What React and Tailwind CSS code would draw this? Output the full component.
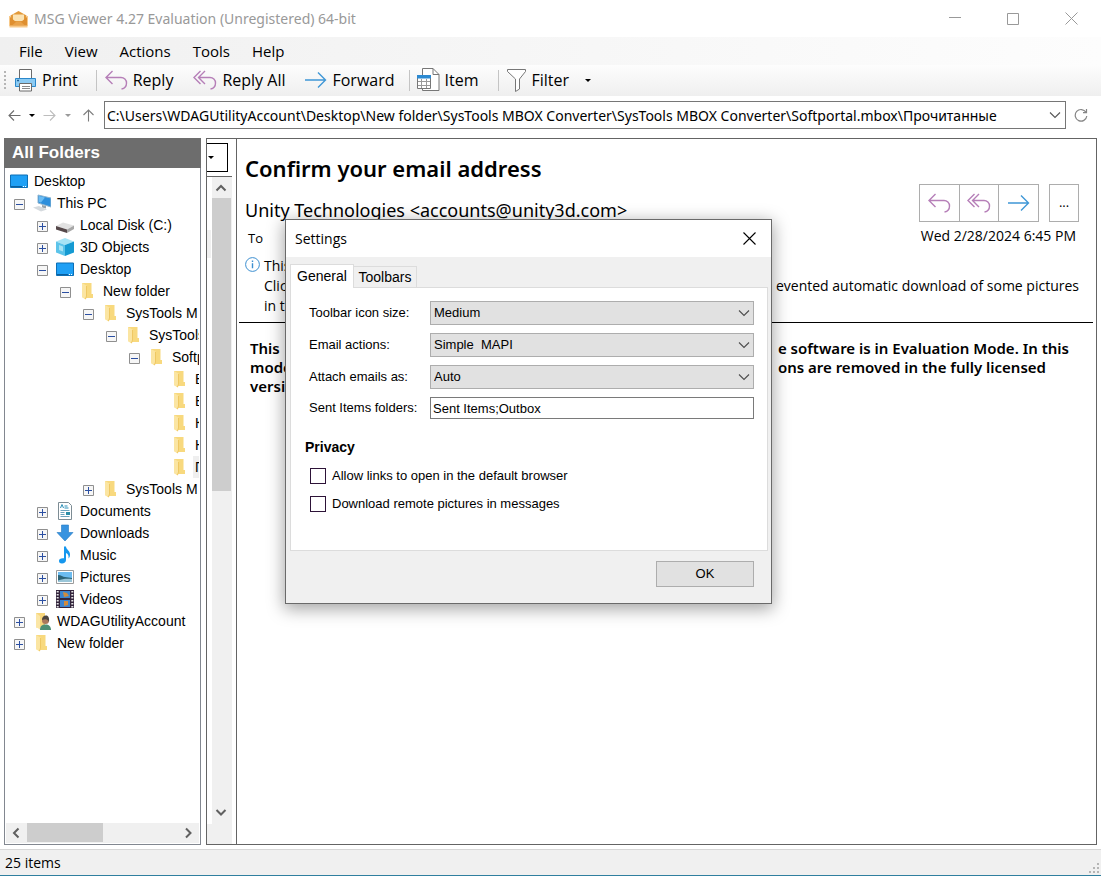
import React from "react";

const ui = "font-['Open_Sans','Noto_Sans',sans-serif]";

function AppIcon() {
  return (
    <svg width="19" height="18" viewBox="0 0 19 18" className="shrink-0" aria-hidden="true">
      <path d="M1.500 5.500 9.500 1l8 4.500V16h-16Z" fill="#e39a3a" />
      <path d="M4 4.500h11V11H4Z" fill="#fbe3b4" />
      <path d="M1 7l5.500 4.500h6L18 7v10H1Z" fill="#df8f30" />
      <path d="M3.500 15 7.500 11.500h4l4 3.500Z" fill="#e9a24a" />
      <path d="M.5 15.500h18v2H.5Z" fill="#f7c98a" />
      <path d="M.5 6v10M18.500 6v10" stroke="#f7c98a" />
    </svg>
  );
}

function PrintIcon() {
  return (
    <svg width="23" height="23" viewBox="0 0 23 23" className="shrink-0" aria-hidden="true">
      <path d="M5.500 9.500v-9h12v9" fill="#fff" stroke="#6b6b6b" />
      <path d="M1.500 9.500h20v8h-20Z" fill="#8ccbf3" stroke="#2b88cb" />
      <path d="M3 11.500h2" stroke="#1b5f96" strokeWidth="1.500" />
      <path d="M5.500 14.500h12v7.500h-12Z" fill="#fff" stroke="#6b6b6b" />
      <path d="M8 17.500h8M8 19.500h8" stroke="#8a8a8a" />
    </svg>
  );
}

function ReplyIcon() {
  return (
    <svg width="23" height="22" viewBox="0 0 23 22" fill="none" stroke="#b67fb8" strokeWidth="1.400" className="shrink-0" aria-hidden="true">
      <path d="M7.500 2 1 8.500 7.500 15M1 8.500h15a5.500 5.500 0 0 1 5.500 5.500c0 3-2 5.500-5 6" />
    </svg>
  );
}

function ReplyAllIcon() {
  return (
    <svg width="24" height="22" viewBox="0 0 24 22" fill="none" stroke="#b67fb8" strokeWidth="1.400" className="shrink-0" aria-hidden="true">
      <path d="M7.500 2 1 8.500 7.500 15M12 2 5.500 8.500 12 15M5.500 8.500H17a5.500 5.500 0 0 1 5.500 5.500c0 3-2 5.500-5 6" />
    </svg>
  );
}

function ForwardIcon() {
  return (
    <svg width="22" height="20" viewBox="0 0 22 20" fill="none" stroke="#3f97d6" strokeWidth="1.400" className="shrink-0" aria-hidden="true">
      <path d="M0 10h20.500M13 2.500l7.500 7.500-7.500 7.500" />
    </svg>
  );
}

function ItemIcon() {
  return (
    <svg width="24" height="24" viewBox="0 0 24 24" className="shrink-0" aria-hidden="true">
      <path d="M6.500.5h10.500l6 6v16h-16.500Z" fill="#fff" stroke="#777" />
      <path d="M17 .5v6h6" fill="none" stroke="#777" />
      <path d="M1.500 8.500h13v12h-13Z" fill="#fff" stroke="#777" />
      <path d="M1 7h14v3.500H1Z" fill="#2c8ad2" />
      <path d="M5.500 11v9M10.500 11v9M2 13.500h12M2 17.500h12" stroke="#9a9a9a" />
    </svg>
  );
}

function FilterIcon() {
  return (
    <svg width="20" height="23" viewBox="0 0 20 23" fill="#fff" stroke="#777" className="shrink-0" aria-hidden="true">
      <path d="M.5.5h18v2L12.500 10v10l-4 2.500V10L.5 2.500Z" />
    </svg>
  );
}

function Caret({ color = "#000" }) {
  return (
    <svg width="6" height="3" viewBox="0 0 6 3" className="shrink-0" aria-hidden="true">
      <path d="M0 0h6L3 3Z" fill={color} />
    </svg>
  );
}

function Chevron({ d, w = 12, h = 12, color = "#606060", stroke = 2 }) {
  return (
    <svg width={w} height={h} viewBox="0 0 12 12" fill="none" stroke={color} strokeWidth={stroke} aria-hidden="true">
      <path d={d} />
    </svg>
  );
}

const DOWN = "M1.500 4 6 8.500 10.500 4";
const UP = "M1.500 8.500 6 4l4.500 4.500";
const LEFT = "M8.500 1.500 4 6l4.500 4.500";
const RIGHT = "M4 1.500 8.500 6 4 10.500";

function NavArrow({ d, color }) {
  return (
    <svg width="13" height="13" viewBox="0 0 13 13" fill="none" stroke={color} strokeWidth="1.100" aria-hidden="true">
      <path d={d} />
    </svg>
  );
}

function TreeIcon({ kind }) {
  const shapes = {
    desktop: (
      <>
        <path d="M.5 3h17v12.500H.5Z" fill="#1fa0f5" stroke="#0d6fb5" />
        <path d="M1 14h11v1H1Z" fill="#0b5f9e" />
        <path d="M13 14.500h4" stroke="#fff" strokeDasharray="1 1" />
      </>
    ),
    pc: (
      <>
        <path d="M5 1l13 3v9L5 9Z" fill="#2d8fdc" stroke="#8eb4cf" />
        <path d="M6 2l6 1.500L8 8.500 6 8Z" fill="#6bbcf3" />
        <path d="M9 11l4 1v2.500l-4-1Z" fill="#9aa4ab" />
        <path d="M0 13.500l6-1.500 8 3.500-6 2Z" fill="#d5dade" />
      </>
    ),
    disk: (
      <>
        <path d="M0 10l7-3.500L18 9.500l-7 4Z" fill="#e2e2e2" />
        <path d="M0 10l11 3.500V17L0 13.500Z" fill="#55484a" />
        <path d="M11 13.500l7-4V13l-7 4Z" fill="#a7a7a7" />
      </>
    ),
    cube: (
      <>
        <path d="M0 3.500 9 0l9 3.500L9 7Z" fill="#a6e3f5" />
        <path d="M0 3.500 9 7v11l-9-3.500Z" fill="#5cc4ea" />
        <path d="M18 3.500 9 7v11l9-3.500Z" fill="#149ad2" />
        <path d="M3 7l4 1.500v5L3 12Z" fill="#a6e3f5" />
      </>
    ),
    folder: (
      <>
        <path d="M3 1h9.500v11H14v4H7v1.500L3 15Z" fill="#f8d97e" />
        <path d="M3 1l4.500 2.500V14L6.500 17.500 3 15Z" fill="#fbe5a2" />
        <path d="M7.500 4v10l-1 3" stroke="#efc863" />
      </>
    ),
    doc: (
      <>
        <path d="M2.500.5h10l3 3v14h-13Z" fill="#fff" stroke="#7d8c94" />
        <path d="M4.500 6 6 2.500 7.500 6M8.500 4h3M8.500 6h4M10 10.500h3.500" stroke="#2a8fb8" fill="none" />
        <path d="M4.500 8.500h9M4.500 10.500h4M4.500 12.500h4M4.500 14.500h9" stroke="#6aa3bd" />
        <path d="M10 10h4v3h-4Z" fill="#2c8ea8" />
      </>
    ),
    down: <path d="M5.500 1h7v7.500H17L9 17 1 8.500h4.500Z" fill="#3793e0" stroke="#2178c2" strokeWidth=".6" />,
    music: (
      <path d="M8 .5h2c0 3 4 4 4 8 0 2-.6 3-1.500 4 .5-3-.5-4.500-2.500-5.500V14c0 2-1.700 3.500-4 3.500S3 16.500 3 14.800 4.700 12 8 12.300Z" fill="#1597ee" />
    ),
    picture: (
      <>
        <path d="M.5 2.500h17v13H.5Z" fill="#fff" stroke="#9b9b9b" />
        <path d="M2 4h14v6H2Z" fill="#6cbcf0" />
        <path d="M2 7c3 0 5 2 7 2s5 1 7 1v4H2Z" fill="#2c6478" />
        <path d="M2 12.500c5-2 9-2 14-1.500v3H2Z" fill="#9ac6d8" />
      </>
    ),
    video: (
      <>
        <path d="M0 0h18v18H0Z" fill="#33243c" />
        <path d="M4 1h10v7H4ZM4 10h10v7H4Z" fill="#3a83d0" />
        <path d="M7 2l4 1 2 3-5 1ZM8 11h4v4l-4 1Z" fill="#d08a3c" />
        <path d="M1.700 1v17M16.300 1v17" stroke="#e4e4e4" strokeWidth="2" strokeDasharray="1.500 1.500" />
      </>
    ),
    user: (
      <>
        <path d="M3 1h9v14.500H3Z" fill="#f7d67c" />
        <path d="M3 1l4 3v13.500L3 15Z" fill="#fbe6a6" />
        <path d="M7 18c0-4 2-5.500 5.500-5.500S18 14.500 18 18Z" fill="#4d8f74" />
        <circle cx="12.500" cy="8.500" r="3.500" fill="#a9785b" />
        <path d="M9 8c0-3 1.500-4.500 4-4.500S16.500 6 16 10c-1-2.500-3-3.500-7-2Z" fill="#4b4540" />
      </>
    ),
  };
  return (
    <svg width="18" height="18" viewBox="0 0 18 18" fill="none" className="shrink-0" aria-hidden="true">
      {shapes[kind]}
    </svg>
  );
}

function Expander({ open }) {
  return (
    <button type="button" aria-label={open ? "Collapse" : "Expand"} className="size-[11px] shrink-0">
      <svg width="11" height="11" viewBox="0 0 11 11">
        <path d="M.5.5h10v10H.5Z" fill="#f6f6f6" stroke="#8f8f8f" />
        <path d={open ? "M2 5.500h7" : "M2 5.500h7M5.500 2v7"} stroke="#2b4fa2" />
      </svg>
    </button>
  );
}

const indents = ["pl-[5px]", "pl-[9px]", "pl-8", "pl-[55px]", "pl-[78px]", "pl-[101px]", "pl-[124px]", "pl-[166px]"];

const tree = [
  { level: 0, icon: "desktop", label: "Desktop" },
  { level: 1, icon: "pc", label: "This PC", open: true },
  { level: 2, icon: "disk", label: "Local Disk (C:)", open: false },
  { level: 2, icon: "cube", label: "3D Objects", open: false },
  { level: 2, icon: "desktop", label: "Desktop", open: true },
  { level: 3, icon: "folder", label: "New folder", open: true },
  { level: 4, icon: "folder", label: "SysTools M", open: true },
  { level: 5, icon: "folder", label: "SysTools", open: true },
  { level: 6, icon: "folder", label: "Softp", open: true },
  { level: 7, icon: "folder", label: "В" },
  { level: 7, icon: "folder", label: "В" },
  { level: 7, icon: "folder", label: "К" },
  { level: 7, icon: "folder", label: "Н" },
  { level: 7, icon: "folder", label: "П", selected: true },
  { level: 4, icon: "folder", label: "SysTools M", open: false },
  { level: 2, icon: "doc", label: "Documents", open: false },
  { level: 2, icon: "down", label: "Downloads", open: false },
  { level: 2, icon: "music", label: "Music", open: false },
  { level: 2, icon: "picture", label: "Pictures", open: false },
  { level: 2, icon: "video", label: "Videos", open: false },
  { level: 1, icon: "user", label: "WDAGUtilityAccount", open: false },
  { level: 1, icon: "folder", label: "New folder", open: false },
];

function FolderPane() {
  return (
    <aside className="flex w-[197px] shrink-0 flex-col border border-[#828790] bg-white font-['Liberation_Sans',sans-serif]">
      <h2 className="-mx-px -mt-px h-[30px] shrink-0 bg-[#6d6d6d] pl-2 text-[17px] leading-[29px] font-bold text-white">All Folders</h2>
      <ul className="mr-px flex-1 overflow-hidden pt-[2px] text-[14px] text-black">
        {tree.map((n, i) => (
          <li key={i} className={`flex h-[22px] items-center whitespace-nowrap ${indents[n.level]}`}>
            {n.open !== undefined && (
              <span className="mr-2 flex pt-[3px]">
                <Expander open={n.open} />
              </span>
            )}
            <TreeIcon kind={n.icon} />
            <span className={`ml-1 px-[2px] leading-[22px] ${n.selected ? "bg-[#efefef]" : ""}`}>{n.label}</span>
          </li>
        ))}
      </ul>
      <div className="mx-px mb-px flex h-5 shrink-0 items-start bg-[#f0f0f0]">
        <button type="button" aria-label="Scroll left" className="flex h-[19px] w-[21px] items-center pl-1">
          <Chevron d={LEFT} />
        </button>
        <div className="h-[19px] w-[76px] bg-[#cdcdcd]" />
        <div className="flex-1" />
        <button type="button" aria-label="Scroll right" className="flex h-[19px] w-[21px] items-center pl-1">
          <Chevron d={RIGHT} />
        </button>
      </div>
    </aside>
  );
}

function ListPane() {
  return (
    <div className="flex w-[29px] shrink-0 flex-col">
      <div className="mt-1 flex h-[29px] w-[21px] items-center border border-l-0 border-black">
        <button type="button" aria-label="List options" className="pl-px">
          <Caret />
        </button>
      </div>
      <div className="mt-1 h-px w-[25px] bg-[#646464]" />
      <div className="flex flex-1">
        <div className="flex w-[5px] flex-col">
          <div className="mt-[53px] h-7 w-1 bg-[#f0f0f0]" />
          <div className="flex-1" />
          <div className="h-5 bg-[#f0f0f0]" />
        </div>
        <div className="flex w-5 flex-col items-start bg-[#f0f0f0]">
          <button type="button" aria-label="Scroll up" className="flex h-[21px] items-center pl-[3px]">
            <Chevron d={UP} />
          </button>
          <div className="h-[293px] w-[19px] bg-[#cdcdcd]" />
          <div className="flex-1" />
          <button type="button" aria-label="Scroll down" className="mb-5 flex h-6 items-center pl-[3px]">
            <Chevron d={DOWN} />
          </button>
        </div>
      </div>
    </div>
  );
}

function MessagePane() {
  return (
    <main className={`flex min-w-0 flex-1 flex-col border-l border-[#646464] bg-white text-black ${ui}`}>
      <header className="flex justify-between pr-[17px] pl-2">
        <div className="pt-[14px]">
          <h1 className="font-['Noto_Sans',sans-serif] text-[22px] leading-[30px] font-semibold whitespace-nowrap">Confirm your email address</h1>
          <p className="mt-[15px] font-['Noto_Sans',sans-serif] text-[18px] leading-6 whitespace-nowrap">Unity Technologies &lt;accounts@unity3d.com&gt;</p>
          <p className="mt-[6px] pl-[3px] text-[13px] leading-5">To</p>
        </div>
        <div className="flex flex-col items-end pt-[45px]">
          <div className="flex">
            <div className="flex h-[38px] w-[120px] divide-x divide-[#adadad] border border-[#adadad]">
              <button type="button" aria-label="Reply" className="flex flex-1 items-center justify-center">
                <ReplyIcon />
              </button>
              <button type="button" aria-label="Reply all" className="flex flex-1 items-center justify-center">
                <ReplyAllIcon />
              </button>
              <button type="button" aria-label="Forward" className="flex flex-1 items-center justify-center">
                <ForwardIcon />
              </button>
            </div>
            <button type="button" aria-label="More actions" className="ml-[10px] h-[38px] w-[30px] border border-[#adadad] text-[13px]">
              ...
            </button>
          </div>
          <p className="mt-1 pr-[3px] text-[14px] leading-5 whitespace-nowrap">Wed 2/28/2024 6:45 PM</p>
        </div>
      </header>
      <section className="mt-2 flex gap-1 pr-[17px] pl-2 text-[14px] leading-5">
        <svg width="15" height="15" viewBox="0 0 15 15" fill="none" stroke="#3c8fd0" className="mt-px shrink-0" aria-hidden="true">
          <circle cx="7.500" cy="7.500" r="6.900" />
          <path d="M7.500 6.300v5M7.500 3.500V5" strokeWidth="1.400" />
        </svg>
        <div className="min-w-0 flex-1 whitespace-nowrap">
          <p>This</p>
          <p className="flex justify-between">
            <span>Click</span>
            <span>evented automatic download of some pictures</span>
          </p>
          <p>in the</p>
        </div>
      </section>
      <hr className="mt-[6px] mr-[3px] ml-[2px] border-t border-black" />
      <section className="mt-4 pr-[27px] pl-[13px] font-['Noto_Sans',sans-serif] text-[15px] leading-[19px] font-semibold whitespace-nowrap">
        <p className="flex justify-between">
          <span>This</span>
          <span>e software is in Evaluation Mode. In this</span>
        </p>
        <p className="flex justify-between pr-[23px]">
          <span>mode</span>
          <span>ons are removed in the fully licensed</span>
        </p>
        <p>versi</p>
      </section>
    </main>
  );
}

function SelectRow({ id, label, value }) {
  return (
    <>
      <label htmlFor={id}>{label}</label>
      <div className="relative">
        <select id={id} defaultValue={value} className="h-6 w-full appearance-none rounded-none border border-[#adadad] bg-[#e1e1e1] px-[3px]">
          <option value={value}>{value}</option>
        </select>
        <span className="pointer-events-none absolute top-[6px] right-1">
          <Chevron d="M1 3.500 6 8.500l5-5" color="#4d4d4d" stroke={1.1} />
        </span>
      </div>
    </>
  );
}

function CheckRow({ label }) {
  return (
    <label className="flex items-center gap-[6px]">
      <input type="checkbox" className="size-4 appearance-none border border-[#2d1338] bg-white" />
      {label}
    </label>
  );
}

function SettingsDialog() {
  return (
    <div
      role="dialog"
      aria-labelledby="settings-title"
      className="absolute top-[219px] left-[285px] flex w-[487px] flex-col border border-[#6a6a6a] bg-[#f0f0f0] font-['Liberation_Sans',sans-serif] text-[13px] text-black shadow-[0_4px_16px_1px_rgba(0,0,0,0.36)]"
    >
      <div className={`flex h-[37px] items-center justify-between bg-white pr-[15px] pl-[9px] ${ui}`}>
        <h2 id="settings-title" className="text-[14px]">Settings</h2>
        <button type="button" aria-label="Close">
          <svg width="13" height="13" viewBox="0 0 13 13" stroke="#000" strokeWidth="1.100">
            <path d="M.5.5l12 12M12.500.5l-12 12" />
          </svg>
        </button>
      </div>
      <div role="tablist" className="mt-[7px] flex items-end pl-1 text-[14px]">
        <button type="button" role="tab" aria-selected="true" className="z-10 -mb-px h-6 w-16 border border-b-0 border-[#dcdcdc] bg-white">
          General
        </button>
        <button type="button" role="tab" aria-selected="false" className="h-[21px] w-[63px] border border-b-0 border-l-0 border-[#dcdcdc]">
          Toolbars
        </button>
      </div>
      <div className="mr-[3px] ml-1 border border-[#dcdcdc] bg-white pt-[13px] pr-[13px] pb-[38px] pl-[14px]">
        <div className="grid grid-cols-[121px_1fr] items-center gap-y-2 pl-1">
          <SelectRow id="icon-size" label="Toolbar icon size:" value="Medium" />
          <SelectRow id="email-actions" label="Email actions:" value={"Simple\u00a0\u00a0MAPI"} />
          <SelectRow id="attach-as" label="Attach emails as:" value="Auto" />
          <label htmlFor="sent-folders">Sent Items folders:</label>
          <input id="sent-folders" type="text" defaultValue="Sent Items;Outbox" className="h-[22px] w-full border border-[#7a7a7a] bg-white px-[2px]" />
        </div>
        <h3 className="mt-[18px] text-[14px] leading-5 font-bold">Privacy</h3>
        <div className="mt-[11px] flex flex-col gap-3 pl-[5px] leading-4">
          <CheckRow label="Allow links to open in the default browser" />
          <CheckRow label="Download remote pictures in messages" />
        </div>
      </div>
      <div className="flex justify-end pt-[10px] pr-[17px] pb-4">
        <button type="button" className="h-[26px] w-[98px] border border-[#adadad] bg-[#e1e1e1]">
          OK
        </button>
      </div>
    </div>
  );
}

function ToolButton({ icon, children }) {
  return (
    <button type="button" className="flex items-center gap-[5px] whitespace-nowrap">
      {icon}
      {children}
    </button>
  );
}

function Separator() {
  return <div className="h-[21px] w-px bg-[#c4c4c4]" />;
}

export default function App() {
  return (
    <div className={`relative flex min-h-screen flex-col overflow-hidden bg-white text-black ${ui}`}>
      <div className="flex h-[37px] shrink-0 items-center pr-[23px] pl-[9px]">
        <AppIcon />
        <span className="ml-[6px] font-['Noto_Sans',sans-serif] text-[14px] text-[#999]">MSG Viewer 4.27 Evaluation (Unregistered) 64-bit</span>
        <div className="ml-auto flex items-center gap-[46px]">
          <button type="button" aria-label="Minimize">
            <svg width="12" height="13" viewBox="0 0 12 13" stroke="#999" fill="none"><path d="M0 5.500h12" /></svg>
          </button>
          <button type="button" aria-label="Maximize">
            <svg width="12" height="12" viewBox="0 0 12 12" stroke="#999" fill="none"><path d="M.5.5h11v11H.5Z" /></svg>
          </button>
          <button type="button" aria-label="Close window">
            <svg width="13" height="13" viewBox="0 0 13 13" stroke="#999" fill="none"><path d="M.5.5l12 12M12.500.5l-12 12" /></svg>
          </button>
        </div>
      </div>

      <nav className="flex h-7 shrink-0 items-center gap-[22px] bg-linear-to-r from-[#f0f0f0] to-[#fdfdfd] pl-[19px] text-[15px]">
        <button type="button">File</button>
        <button type="button">View</button>
        <button type="button">Actions</button>
        <button type="button">Tools</button>
        <button type="button">Help</button>
      </nav>

      <div className="flex h-[31px] shrink-0 items-center bg-linear-to-b from-[#fdfdfd] to-[#efefef] pb-px pl-1 text-[16px]">
        <div className="mr-2 h-[18px] border-l-2 border-dotted border-[#b5b5b5]" />
        <ToolButton icon={<PrintIcon />}>Print</ToolButton>
        <div className="ml-[18px]"><Separator /></div>
        <div className="ml-2 flex items-center gap-5">
          <ToolButton icon={<ReplyIcon />}>Reply</ToolButton>
          <ToolButton icon={<ReplyAllIcon />}>Reply All</ToolButton>
          <ToolButton icon={<ForwardIcon />}>Forward</ToolButton>
        </div>
        <div className="ml-[14px]"><Separator /></div>
        <div className="ml-[6px]"><ToolButton icon={<ItemIcon />}>Item</ToolButton></div>
        <div className="ml-[19px]"><Separator /></div>
        <div className="ml-2 flex items-center gap-4">
          <ToolButton icon={<FilterIcon />}>Filter</ToolButton>
          <Caret />
        </div>
      </div>

      <div className="flex h-[42px] shrink-0 items-start pt-[5px] pr-[13px] pl-2">
        <div className="flex h-7 w-24 items-center">
          <button type="button" aria-label="Back"><NavArrow d="M12.500 6.500H1M6 1.500l-5 5 5 5" color="#6d6d6d" /></button>
          <span className="ml-2"><Caret /></span>
          <button type="button" aria-label="Next" className="ml-2"><NavArrow d="M.5 6.500H12M7 1.500l5 5-5 5" color="#bdbdbd" /></button>
          <span className="ml-[9px]"><Caret color="#9a9a9a" /></span>
          <button type="button" aria-label="Up" className="ml-[11px]"><NavArrow d="M6.500 12.500V1M1.500 6l5-5 5 5" color="#7d7d7d" /></button>
        </div>
        <div className="flex h-7 min-w-0 flex-1 items-center border border-[#767676] pr-1">
          <input
            aria-label="Folder path"
            defaultValue="C:\Users\WDAGUtilityAccount\Desktop\New folder\SysTools MBOX Converter\SysTools MBOX Converter\Softportal.mbox\Прочитанные"
            className="min-w-0 flex-1 pl-[2px] font-['Noto_Sans',sans-serif] text-[14px] outline-none"
          />
          <button type="button" aria-label="Show paths"><Chevron d="M1 3.500 6 8.500l5-5" color="#555" stroke={1.1} /></button>
        </div>
        <button type="button" aria-label="Refresh" className="ml-2 flex h-7 items-center">
          <svg width="14" height="14" viewBox="0 0 14 14" fill="none" stroke="#858585" strokeWidth="1.200"><path d="M12 4.300A5.800 5.800 0 1 0 12.800 8M12.500 1v3.600H9" /></svg>
        </button>
      </div>

      <div className="flex flex-1 gap-[5px] pr-1 pl-1">
        <FolderPane />
        <div className="flex min-w-0 flex-1 border border-[#646464]">
          <ListPane />
          <MessagePane />
        </div>
      </div>

      <footer className="mt-1 flex h-[27px] shrink-0 items-center justify-between border-t border-b border-t-[#d7d7d7] border-b-[#2f7f9f] bg-[#f0f0f0] pl-[5px] text-[14px]">
        25 items
        <svg width="12" height="12" viewBox="0 0 12 12" className="self-end" fill="#b5b5b5" aria-hidden="true">
          <path d="M8 0h2v2H8ZM8 4h2v2H8ZM8 8h2v2H8ZM4 4h2v2H4ZM4 8h2v2H4ZM0 8h2v2H0Z" />
        </svg>
      </footer>

      <SettingsDialog />
    </div>
  );
}
